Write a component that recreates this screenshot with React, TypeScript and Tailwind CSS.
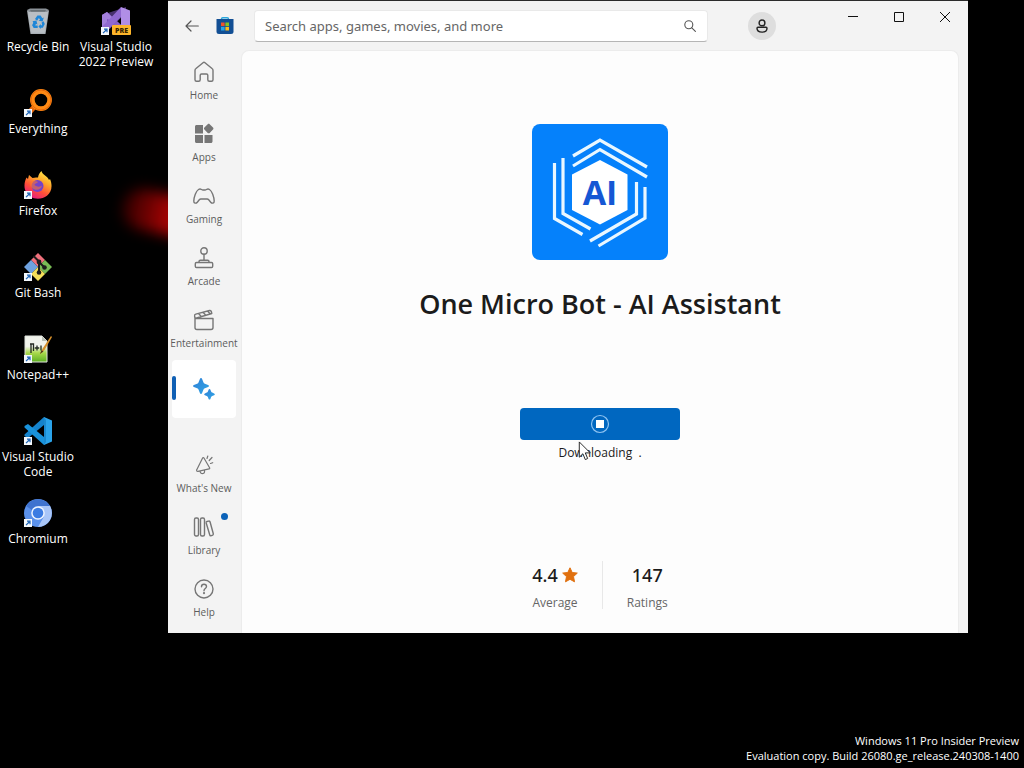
import { ReactNode, useState } from 'react';

type IconProps = { className?: string };

// Small arrow badge in the corner of a desktop shortcut
const ShortcutBadge = () => (
    <svg viewBox="0 0 8 8" className="absolute bottom-0 left-0 w-2 h-2">
        <rect width="8" height="8" fill="#f4f8fc" />
        <path d="M2 6.2 5.2 3M3 2.2h3v3" fill="none" stroke="#1b62b5" strokeWidth="1.2" />
    </svg>
);

const RecycleBinIcon = () => (
    <svg viewBox="0 0 28 28" className="w-7 h-7">
        <path d="M3 3.5 6.5 27h15L25 3.5z" fill="#a9b0b6" />
        <path d="M4 4.5 7.4 25.8h13.2L24 4.5z" fill="#b9bfc4" />
        <path d="M3 3 6 1.5h16L25 3l-2 2H5z" fill="#8b9298" />
        <path d="M6 3.2h16l-1 1.2H7z" fill="#5d6469" />
        <g fill="#1d86d8">
            <path d="m11 12 2.4-3.6h3.2l1.8 2.8 1.4-.7-1.2 4-4-.8 1.5-.9-1.2-1.8-1.8 2.7z" />
            <path d="m8.6 14.2 3.8-.6 1 3.8-1.4-.7-.7 1.7h2.4V21h-4l-1.6-2.8 1.2-2.4z" />
            <path d="m17.6 15.4 2-1.1 1.2 2.6-2 3.8h-2v1.4l-2.4-2.5 2.4-2.6v1.3h1.4z" />
        </g>
    </svg>
);

const VisualStudioIcon = () => (
    <svg viewBox="0 0 30 28" className="w-[30px] h-7">
        <path d="M1 8 6 5l16 14.5V27L1 11z" fill="#8a63c9" />
        <path d="M1 8v14l5 2.5L25 6V0z" fill="#7650b8" opacity=".6" />
        <path d="m20 0 9 3.5v22L20 28z" fill="#b08ee6" />
        <path d="M1 8 6 5l5 5v4l-5-2v7l-5 2z" fill="#a37fdc" />
        <path d="M6 24 20 10V0L11 9.5 1 20v2z" fill="#9069d0" />
        <rect x="11" y="18" width="19" height="10" rx="1" fill="#fdb52a" />
        <text x="20.5" y="25.6" textAnchor="middle" fontSize="7" fontWeight="800" fontFamily="Open Sans, sans-serif" fill="#3a2500">PRE</text>
    </svg>
);

const EverythingIcon = () => (
    <svg viewBox="0 0 28 28" className="w-7 h-7">
        <path d="M11 17 4 25" stroke="#e8680c" strokeWidth="5" />
        <circle cx="17" cy="11" r="8.6" fill="none" stroke="#ff8a14" strokeWidth="4.6" />
        <circle cx="17" cy="11" r="10" fill="none" stroke="#e8680c" strokeWidth="1" />
    </svg>
);

const FirefoxIcon = () => (
    <svg viewBox="0 0 28 28" className="w-7 h-7">
        <defs>
            <linearGradient id="fx-body" x1=".8" y1="0" x2=".25" y2="1">
                <stop offset="0" stopColor="#fff04a" />
                <stop offset=".35" stopColor="#ffa62b" />
                <stop offset=".65" stopColor="#ff5038" />
                <stop offset="1" stopColor="#e31587" />
            </linearGradient>
        </defs>
        <path d="M2.5 6.5 4 8l1-4 3.5 3c2-.7 4-.7 5.500-.4.4-3 1.800-5 3.500-6.600C18 4 24 5 25 9l1-1c3 7 1.400 13-3 16.800C16 30 4 28.500 1 18.500-.3 14 1 9.500 2.500 6.500z" fill="url(#fx-body)" />
        <circle cx="13.500" cy="15" r="6" fill="#7542c9" />
        <path d="M7 11c2-1.500 4.500-1 6.500-.5 1 .5 0 1.500-1.700 2-1.500.5-2 1.500.2 2.500 3 1.200 4.500.5 6-.5-.5 4-6 6-10 2.500-2.500-2.200-2.200-4-1-6z" fill="#ff7a25" opacity=".55" />
    </svg>
);

const GitBashIcon = () => (
    <svg viewBox="0 0 28 28" className="w-7 h-7">
        <path d="M14 0 21 7l-7 7-7-7z" fill="#f0707c" />
        <path d="m21 7 7 7-7 7-7-7z" fill="#78bb55" />
        <path d="m7 7 7 7-7 7-7-7z" fill="#6fa2e0" />
        <path d="m14 14 7 7-7 7-7-7z" fill="#f5e05a" />
        <path d="M9.500 3 15 8.500v11M15 9l5 5" fill="none" stroke="#1c1c1c" strokeWidth="2" />
        <circle cx="15" cy="9" r="2.400" fill="#1c1c1c" />
        <circle cx="20.500" cy="14.500" r="2.300" fill="#1c1c1c" />
        <circle cx="15" cy="19.500" r="2.300" fill="#1c1c1c" />
    </svg>
);

const NotepadIcon = () => (
    <svg viewBox="0 0 28 28" className="w-7 h-7">
        <defs>
            <linearGradient id="npp-page" x1="0" y1="0" x2="0" y2="1">
                <stop offset=".4" stopColor="#f1f3ec" />
                <stop offset=".65" stopColor="#a9d94c" />
                <stop offset="1" stopColor="#5caf22" />
            </linearGradient>
        </defs>
        <path d="M1 1h17l5 5v21H1z" fill="url(#npp-page)" stroke="#dfe3dc" />
        <path d="M18 1v5h5z" fill="#b9c0b5" />
        <path d="M7 18V9h2.500v7M6 9h4M13 10.500v5M10.800 13h4.400M17 10.500v5" fill="none" stroke="#242a22" strokeWidth="1.300" />
        <path d="m27 1-8 12-3 6 4.500-4L28 2z" fill="#d7902b" />
        <path d="m17.500 15-1.500 4 3.500-2.500z" fill="#52381c" />
    </svg>
);

const VsCodeIcon = () => (
    <svg viewBox="0 0 28 28" className="w-7 h-7">
        <path d="m20 0 8 3.500v21L20 28z" fill="#2aa3ea" />
        <path d="M20 0v8L4 21l-3.500-2v-1.500z" fill="#1583cc" />
        <path d="M20 28v-8L4 7 .5 9v1.500z" fill="#1993dc" />
        <path d="M20 0v28l2-3V3z" fill="#1b89cf" />
    </svg>
);

const ChromiumIcon = () => (
    <svg viewBox="0 0 28 28" className="w-7 h-7">
        <circle cx="14" cy="14" r="14" fill="#5b91ea" />
        <path d="M14 7h12a14 14 0 0 1-12 21l6-10.500z" fill="#a9c6f8" />
        <path d="M2 7a14 14 0 0 1 24 0H14a7 7 0 0 0-6 4z" fill="#3f73cf" />
        <circle cx="14" cy="14" r="6.800" fill="#eef4fe" />
        <circle cx="14" cy="14" r="5.300" fill="#3c7ce2" />
    </svg>
);

type Shortcut = { label: string; icon: ReactNode; badge?: boolean };

const firstColumn: Shortcut[] = [
    { label: 'Recycle Bin', icon: <RecycleBinIcon />, badge: false },
    { label: 'Everything', icon: <EverythingIcon /> },
    { label: 'Firefox', icon: <FirefoxIcon /> },
    { label: 'Git Bash', icon: <GitBashIcon /> },
    { label: 'Notepad++', icon: <NotepadIcon /> },
    { label: 'Visual Studio Code', icon: <VsCodeIcon /> },
    { label: 'Chromium', icon: <ChromiumIcon /> },
];

const secondColumn: Shortcut[] = [{ label: 'Visual Studio 2022 Preview', icon: <VisualStudioIcon /> }];

const DesktopColumn = ({ items }: { items: Shortcut[] }) => (
    <div className="flex flex-col w-[76px]">
        {items.map(({ label, icon, badge = true }) => (
            <button key={label} className="h-[82px] pt-[7px] flex flex-col items-center gap-1 text-xs leading-[15px] text-white">
                <span className="relative block">
                    {icon}
                    {badge && <ShortcutBadge />}
                </span>
                <span>{label}</span>
            </button>
        ))}
    </div>
);

// Line icons of the navigation rail
const RailSvg = ({ children }: { children: ReactNode }) => (
    <svg viewBox="0 0 22 22" className="w-[22px] h-[22px]" fill="none" stroke="#767676" strokeWidth="1.400" strokeLinejoin="round" strokeLinecap="round">
        {children}
    </svg>
);

const HomeIcon = () => (
    <RailSvg>
        <path d="M2 9.500c0-.9.300-1.500 1-2L10 1.700c.6-.5 1.400-.5 2 0l7 5.800c.7.500 1 1.100 1 2v9.300c0 .9-.6 1.500-1.500 1.500h-2.200c-.9 0-1.500-.6-1.500-1.500v-4.500c0-.8-.6-1.300-1.300-1.300h-5c-.7 0-1.300.5-1.300 1.300v4.500c0 .9-.6 1.500-1.500 1.500H3.500c-.9 0-1.500-.6-1.500-1.500z" />
    </RailSvg>
);

const AppsIcon = () => (
    <RailSvg>
        <g fill="#767676" stroke="none">
            <path d="M3.500 2H10v8.500H2v-7C2 2.700 2.700 2 3.500 2zM2 12h8v8H3.500c-.8 0-1.500-.7-1.500-1.500zM11.500 12h8v6.500c0 .8-.7 1.500-1.500 1.500h-6.500z" />
            <path d="M14.700 1.300c.6-.6 1.400-.6 2 0L20 4.600c.6.600.6 1.400 0 2l-3.300 3.300c-.6.6-1.400.6-2 0l-3.300-3.300c-.6-.6-.6-1.400 0-2z" />
        </g>
    </RailSvg>
);

const GamingIcon = () => (
    <RailSvg>
        <path d="M5.500 4.500c1-.6 2-.6 3 0 .5.300 1 .5 1.500.5h2c.5 0 1-.2 1.500-.5 1-.6 2-.6 3 0 2.500 1.500 4.500 7.500 4.700 11.500.1 2.500-2.200 2.700-3.500 1.200l-2-2.400c-.4-.5-.9-.8-1.500-.8H7.800c-.6 0-1.100.3-1.500.8l-2 2.400C3 18.700.7 18.500.8 16 1 12 3 6 5.500 4.500z" />
    </RailSvg>
);

const ArcadeIcon = () => (
    <RailSvg>
        <circle cx="11" cy="4" r="3.200" />
        <path d="M11 7.200v6M6 15.500v-1c0-.8.500-1.300 1.300-1.300h7.400c.8 0 1.300.5 1.300 1.300v1M3.500 15.500h15c.7 0 1.200.5 1.200 1.200v2.600c0 .7-.5 1.200-1.200 1.200h-15c-.7 0-1.200-.5-1.200-1.200v-2.600c0-.7.5-1.200 1.200-1.200z" />
    </RailSvg>
);

const EntertainmentIcon = () => (
    <RailSvg>
        <path d="M2 9.500h18v9c0 1.100-.9 2-2 2H4c-1.100 0-2-.9-2-2zM2 9.500 1.600 6.800c-.1-.9.400-1.500 1.200-1.700L16.500 1.500c.9-.2 1.600.2 1.800 1l.5 2L2 9.500M5.500 4.500l2.800 3M10 3.300l2.800 3M14.500 2.100l2.800 3" />
    </RailSvg>
);

const AiIcon = () => (
    <svg viewBox="0 0 22 22" className="w-[22px] h-[22px]">
        <defs>
            <linearGradient id="sparkle" x1="0" y1="0" x2="1" y2="1">
                <stop offset="0" stopColor="#2f7fd6" />
                <stop offset="1" stopColor="#31a7e6" />
            </linearGradient>
        </defs>
        <path d="M8 0c.6 0 .9.300 1.100.900l1.300 3.300c.3.800.7 1.200 1.500 1.500l3.200 1.300c1.200.4 1.200 1.600 0 2l-3.200 1.300c-.8.3-1.200.7-1.500 1.500l-1.300 3.300c-.4 1.200-1.800 1.200-2.200 0l-1.300-3.300c-.3-.8-.7-1.200-1.500-1.500L.9 9c-1.200-.4-1.200-1.600 0-2l3.200-1.300c.8-.3 1.200-.7 1.500-1.500L6.900.9C7.100.3 7.400 0 8 0z" fill="url(#sparkle)" />
        <path d="M16.500 11c.5 0 .8.300.9.700l.7 1.800c.2.600.6.900 1.100 1.100l1.900.8c1 .4 1 1.500 0 1.900l-1.900.7c-.5.200-.9.500-1.100 1.100l-.7 1.800c-.3.900-1.500.9-1.800 0l-.7-1.800c-.2-.6-.6-.9-1.100-1.100l-1.900-.7c-1-.4-1-1.500 0-1.900l1.900-.8c.5-.2.900-.5 1.100-1.100l.7-1.800c.1-.4.4-.7.9-.7z" fill="url(#sparkle)" />
    </svg>
);

const WhatsNewIcon = () => (
    <RailSvg>
        <path d="m10.800 3.800 5.800 10c.3.500.1 1-.5 1.100L5 17.300c-.6.100-1-.1-1.300-.5-.2-.5-.1-1 .2-1.400l5.700-11.400c.3-.6.900-.7 1.200-.2zM7 17.300c.4 1.800 1.600 2.500 2.900 2.200 1.400-.3 2-1.600 1.500-3.100M14 4.500l.8-2.500M16.200 6.500 19 3.500M17.500 9.500l2.200-.8" strokeWidth="1.200" />
    </RailSvg>
);

const LibraryIcon = () => (
    <RailSvg>
        <rect x="1.500" y="2" width="4" height="18" rx="1.500" />
        <rect x="7.500" y="2" width="4" height="18" rx="1.500" />
        <path d="m14 5.500 1.600-.4c.8-.2 1.300.1 1.500.9l3.200 11.800c.2.800-.1 1.300-.9 1.500l-1.200.4c-.8.200-1.300-.1-1.500-.9L13.200 7c-.2-.8 0-1.300.8-1.500z" />
    </RailSvg>
);

const HelpIcon = () => (
    <RailSvg>
        <circle cx="11" cy="11" r="9" />
        <path d="M8.500 8.800c0-1.500 1-2.500 2.500-2.500s2.500 1 2.500 2.300c0 1.900-2.500 2-2.500 4.100" />
        <circle cx="11" cy="15.200" r=".4" fill="#767676" />
    </RailSvg>
);

type RailItem = { label: string; icon: ReactNode; dot?: boolean; iconOnly?: boolean };

const topItems: RailItem[] = [
    { label: 'Home', icon: <HomeIcon /> },
    { label: 'Apps', icon: <AppsIcon /> },
    { label: 'Gaming', icon: <GamingIcon /> },
    { label: 'Arcade', icon: <ArcadeIcon /> },
    { label: 'Entertainment', icon: <EntertainmentIcon /> },
    { label: 'AI Hub', icon: <AiIcon />, iconOnly: true },
];

const bottomItems: RailItem[] = [
    { label: "What's New", icon: <WhatsNewIcon /> },
    { label: 'Library', icon: <LibraryIcon />, dot: true },
    { label: 'Help', icon: <HelpIcon /> },
];

const RailButton = ({ item, active, onSelect }: { item: RailItem; active: boolean; onSelect: () => void }) => (
    <button
        onClick={onSelect}
        aria-label={item.label}
        className={`relative w-16 h-[58px] flex flex-col items-center justify-center gap-1 text-[10px] leading-4 text-[#5c5c5c] ${item.iconOnly ? '' : 'pt-1.5'} ${active ? 'bg-white rounded-sm' : ''}`}
    >
        {active && <span className="absolute left-0 top-4 w-1 h-6 rounded-full bg-[#0f5fb4]" />}
        {item.icon}
        {!item.iconOnly && <span className="whitespace-nowrap">{item.label}</span>}
        {item.dot && <span className="absolute right-2 top-2 w-[7px] h-[7px] rounded-full bg-[#0b62b8]" />}
    </button>
);

const StoreIcon = () => (
    <svg viewBox="0 0 18 18" className="w-[18px] h-[18px]">
        <path d="M5.500 3V2c0-.8.500-1.300 1.300-1.300h4.400c.8 0 1.300.5 1.300 1.300v1" fill="none" stroke="#2aa7dc" strokeWidth="1.400" />
        <path d="M.5 2h17v12.500a2.500 2.500 0 0 1-2.500 2.500H3a2.500 2.500 0 0 1-2.500-2.500z" fill="#124f94" />
        <path d="M5 5.500h3.600v3.600H5z" fill="#f0522b" />
        <path d="M9.400 5.500H13v3.600H9.400z" fill="#84c225" />
        <path d="M5 9.900h3.600v3.600H5z" fill="#25a5e8" />
        <path d="M9.400 9.900H13v3.600H9.400z" fill="#fcbc1c" />
    </svg>
);

const TitleBar = () => {
    const [query, setQuery] = useState('');

    return (
        <header className="h-[49px] shrink-0 flex items-center">
            <button aria-label="Back" className="ml-4 w-4 h-6 flex items-center justify-center">
                <svg viewBox="0 0 14 12" className="w-3.5 h-3" fill="none" stroke="#555" strokeWidth="1.200" strokeLinecap="round" strokeLinejoin="round">
                    <path d="M13.300 6H1M6 1 1 6l5 5" />
                </svg>
            </button>
            <span className="ml-4"><StoreIcon /></span>
            <label className="ml-5 flex-1 h-8 px-2.5 flex items-center bg-white border border-[#e9e9e9] border-b-[#b5b5b5] rounded">
                <input
                    type="text"
                    aria-label="Search"
                    placeholder="Search apps, games, movies, and more"
                    value={query}
                    onChange={e => setQuery(e.target.value)}
                    className="flex-1 min-w-0 text-[13px] leading-5 text-[#333] placeholder:text-[#666] outline-none font-['Noto_Sans','Open_Sans',sans-serif]"
                />
                <svg viewBox="0 0 12 12" className="w-3 h-3 mr-px" fill="none" stroke="#555" strokeWidth="1.100" strokeLinecap="round">
                    <circle cx="4.800" cy="4.800" r="4" />
                    <path d="m7.800 7.800 3.600 3.600" />
                </svg>
            </label>
            <button aria-label="Account" className="ml-10 w-7 h-7 rounded-full bg-[#dedede] flex items-center justify-center">
                <svg viewBox="0 0 14 14" className="w-3.5 h-3.5" fill="none" stroke="#222" strokeWidth="1.400">
                    <circle cx="7" cy="3.900" r="2.900" />
                    <path d="M3 8.200h8c.6 0 1 .4 1 1 0 2.500-2 3.900-5 3.900s-5-1.400-5-3.900c0-.6.400-1 1-1z" />
                </svg>
            </button>
            <div className="ml-[54px] self-start flex">
                <button aria-label="Minimize" className="w-[46px] h-8 flex items-center justify-center">
                    <svg viewBox="0 0 10 10" className="w-2.5 h-2.5" stroke="#111"><path d="M0 4.500h10" /></svg>
                </button>
                <button aria-label="Maximize" className="w-[46px] h-8 flex items-center justify-center">
                    <svg viewBox="0 0 10 10" className="w-2.5 h-2.5" fill="none" stroke="#111"><path d="M.5.5h9v9h-9z" /></svg>
                </button>
                <button aria-label="Close" className="w-[46px] h-8 flex items-center justify-center">
                    <svg viewBox="0 0 10 10" className="w-2.5 h-2.5" stroke="#111"><path d="m0 0 10 10M10 0 0 10" /></svg>
                </button>
            </div>
        </header>
    );
};

const AppLogo = () => (
    <svg viewBox="0 0 136 136" className="w-[136px] h-[136px] rounded-lg">
        <rect width="136" height="136" fill="#0581fb" />
        <path d="m68 36 27.500 14.500V86L68 100.500 40 86V50.500z" fill="#fff" />
        <g fill="none" stroke="#e9f7ff" strokeWidth="3.200">
            <path d="M41 32 68 16l47 27" />
            <path d="M41 42 68 25.500l47 27.500" />
            <path d="M22.500 39v55.500L50.500 110.500" />
            <path d="M31 34v55.500L58.500 105" />
            <path d="M104.500 58v32L58 117" />
            <path d="M113 63v31L66.500 122" />
        </g>
        <text x="68" y="81" textAnchor="middle" fontSize="34" fontWeight="700" fontFamily="Open Sans, sans-serif" fill="#1557d4">AI</text>
    </svg>
);

const StarIcon = ({ className }: IconProps) => (
    <svg viewBox="0 0 16 16" className={className} fill="#e0700f" stroke="#e0700f" strokeLinejoin="round">
        <path d="m8 .8 2.200 4.700 5.100.6-3.800 3.500 1 5.200L8 12.300l-4.500 2.500 1-5.200L.7 6.100l5.100-.6z" />
    </svg>
);

const ProductPage = () => (
    <main className="relative flex-1 mr-[9px] border border-b-0 border-[#ececec] rounded-t-lg bg-[#fdfdfd] flex flex-col items-center pt-[73px] text-[#1b1b1b]">
        <AppLogo />
        <h1 className="mt-6 text-[27px] leading-10 font-semibold">One Micro Bot - AI Assistant</h1>
        <button aria-label="Stop download" className="mt-[84px] w-40 h-8 rounded bg-[#0067c0] flex items-center justify-center">
            <svg viewBox="0 0 20 20" className="w-5 h-5">
                <circle cx="10" cy="10" r="8.500" fill="none" stroke="#8fc4f2" strokeWidth="1.200" />
                <rect x="6" y="6" width="8" height="8" fill="#fff" />
            </svg>
        </button>
        <p className="mt-1 text-xs leading-[18px] whitespace-pre">Downloading  .</p>
        <div className="mt-[99px] flex text-center">
            <div className="px-6">
                <p className="flex items-center gap-1 text-lg leading-7 font-medium font-['Noto_Sans','Open_Sans',sans-serif]">
                    4.4 <StarIcon className="w-4 h-4" />
                </p>
                <p className="text-xs leading-7 text-[#666]">Average</p>
            </div>
            <span className="w-px h-12 bg-[#e8e8e8]" />
            <div className="px-6">
                <p className="text-lg leading-7 font-medium font-['Noto_Sans','Open_Sans',sans-serif]">147</p>
                <p className="text-xs leading-7 text-[#666]">Ratings</p>
            </div>
        </div>
        <svg viewBox="0 0 14 21" className="absolute left-[336px] top-[390px] w-3.5 h-5" fill="#fff" stroke="#222">
            <path d="M1 1v16l3.800-3.600L7.300 19.500l2.500-1.100-2.500-5.900h5.200z" />
        </svg>
    </main>
);

const StoreWindow = () => {
    const [active, setActive] = useState('AI Hub');

    return (
        <section className="absolute left-[168px] right-14 top-0 h-[633px] flex flex-col border-t border-[#2b2b2b] bg-[#f3f3f3]">
            <TitleBar />
            <div className="flex-1 min-h-0 flex">
                <nav className="w-[73px] pl-1 pb-2 flex flex-col justify-between">
                    <div className="flex flex-col gap-1">
                        {topItems.map(item => (
                            <RailButton key={item.label} item={item} active={active === item.label} onSelect={() => setActive(item.label)} />
                        ))}
                    </div>
                    <div className="flex flex-col gap-1">
                        {bottomItems.map(item => (
                            <RailButton key={item.label} item={item} active={active === item.label} onSelect={() => setActive(item.label)} />
                        ))}
                    </div>
                </nav>
                <ProductPage />
            </div>
        </section>
    );
};

export default function App() {
    return (
        <div className="relative min-h-screen overflow-hidden bg-black font-['Open_Sans','Noto_Sans',sans-serif]">
            {/* wallpaper glow showing past the window edge */}
            <div className="absolute left-[122px] top-[195px] w-24 h-10 rounded-full bg-linear-to-r from-[#300000] via-[#a80404] to-[#a80404] blur-[7px] rotate-12" />
            <div className="relative flex gap-0.5">
                <DesktopColumn items={firstColumn} />
                <DesktopColumn items={secondColumn} />
            </div>
            <StoreWindow />
            <p className="absolute right-[5px] bottom-[5px] text-right text-[11px] leading-[15px] text-white">
                Windows 11 Pro Insider Preview
                <br />
                Evaluation copy. Build 26080.ge_release.240308-1400
            </p>
        </div>
    );
}
